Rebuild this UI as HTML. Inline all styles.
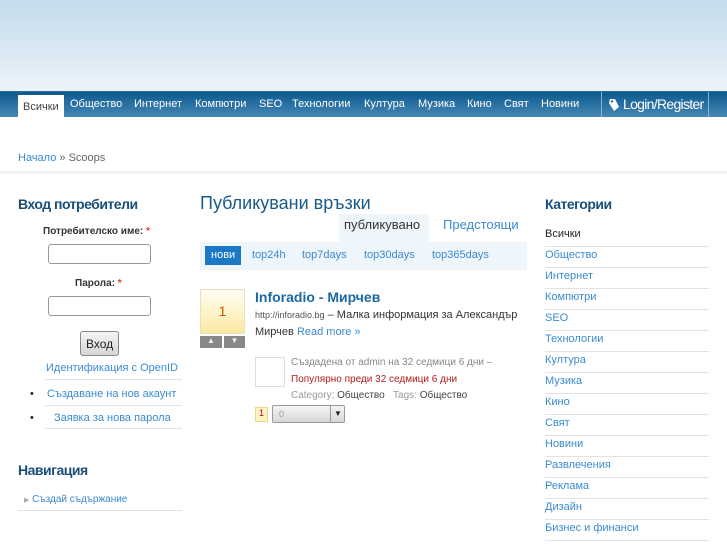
<!DOCTYPE html>
<html><head><meta charset="utf-8"><style>
*{margin:0;padding:0;box-sizing:border-box}
body{width:727px;height:545px;overflow:hidden;background:#fff;font-family:"Liberation Sans","DejaVu Sans",sans-serif;font-size:11px;color:#333;position:relative}
.top{position:absolute;left:0;top:0;width:727px;height:91px;background:linear-gradient(#c3dbec,#ecf3f9)}
.nav{position:absolute;left:0;top:91px;width:727px;height:26px;background:linear-gradient(#0c5a8e,#4787b5);border-top:1px solid #2c6f9f}
.nav span{position:absolute;top:6px;color:#fff;font-size:11px}
.nav .act{top:3px;left:18px;background:#fff;color:#444;height:23px;padding:6px 5px 0}
.lr{position:absolute;left:601px;top:0;width:108px;height:25px;border-left:1px solid #8fb3cf;border-right:1px solid #8fb3cf;color:#fff;font-size:14px;padding:4px 0 0 21px;letter-spacing:-0.7px}
a,.l{color:#3a8bd0}
.abs{position:absolute}
h2{position:absolute;font-size:14px;font-weight:bold;color:#1a4f7a;letter-spacing:-0.5px}
.inp{position:absolute;left:48px;width:103px;height:20px;border:1px solid #999;border-radius:3px;background:#fff}
.cat{position:absolute;left:545px;width:164px;height:21px;border-bottom:1px solid #e2e2e2;color:#3a8bd0;padding-top:2px;font-size:11px}
</style></head><body>
<div class="top"></div>
<div class="nav">
<span class="act">Всички</span>
<span style="left:70px">Общество</span>
<span style="left:134px">Интернет</span>
<span style="left:195px">Компютри</span>
<span style="left:259px">SEO</span>
<span style="left:292px">Технологии</span>
<span style="left:364px">Култура</span>
<span style="left:418px">Музика</span>
<span style="left:467px">Кино</span>
<span style="left:504px">Свят</span>
<span style="left:541px">Новини</span>
<div class="lr"><svg style="position:absolute;left:6px;top:6px" width="12" height="14" viewBox="0 0 12 14"><path d="M2 1 L7 1 L11 9 L6 13 L1 5Z" fill="#fff"/><circle cx="4" cy="3.5" r="1.2" fill="#2d6e9e"/></svg>Login/Register</div>
</div>
<div class="abs" style="left:18px;top:152px"><span class="l">Начало</span> <span style="color:#666">» Scoops</span></div>
<div class="abs" style="left:0;top:171px;width:727px;height:3px;background:#f2f2f2"></div>

<h2 style="left:18px;top:196px">Вход потребители</h2>
<div class="abs" style="left:43px;top:226px;font-weight:bold;font-size:10px">Потребителско име: <span style="color:#e33">*</span></div>
<div class="inp" style="top:244px"></div>
<div class="abs" style="left:75px;top:278px;font-weight:bold;font-size:10px">Парола: <span style="color:#e33">*</span></div>
<div class="inp" style="top:296px"></div>
<div class="abs" style="left:80px;top:331px;width:39px;height:25px;border:1px solid #888;border-radius:3px;background:linear-gradient(#f4f4f4,#d6d6d6);font-size:12px;padding:5px 0 0 5px;color:#222">Вход</div>
<div class="abs l" style="left:46px;top:362px">Идентификация с OpenID</div>
<div class="abs" style="left:45px;top:379px;width:137px;height:1px;background:#e4e4e4"></div>
<div class="abs" style="left:30px;top:388px;color:#222">•</div>
<div class="abs l" style="left:47px;top:388px">Създаване на нов акаунт</div>
<div class="abs" style="left:45px;top:405px;width:137px;height:1px;background:#e4e4e4"></div>
<div class="abs" style="left:30px;top:412px;color:#222">•</div>
<div class="abs l" style="left:54px;top:412px">Заявка за нова парола</div>
<div class="abs" style="left:45px;top:428px;width:137px;height:1px;background:#e4e4e4"></div>
<h2 style="left:18px;top:462px">Навигация</h2>
<div class="abs" style="left:24px;top:494px;font-size:10px"><span style="color:#aaa;font-size:7px">▶</span> <span class="l">Създай съдържание</span></div>
<div class="abs" style="left:18px;top:510px;width:164px;height:1px;background:#e4e4e4"></div>

<div class="abs" style="left:200px;top:193px;font-size:18px;color:#1a5a88">Публикувани връзки</div>
<div class="abs" style="left:339px;top:214px;width:90px;height:28px;background:#eef5fb;font-size:13px;padding:3px 0 0 5px;color:#333">публикувано</div>
<div class="abs l" style="left:443px;top:217px;font-size:13px">Предстоящи</div>
<div class="abs" style="left:200px;top:242px;width:327px;height:28px;background:#eef5fb"></div>
<div class="abs" style="left:205px;top:246px;width:36px;height:19px;background:#1b78c5;color:#fff;padding:3px 0 0 6px">нови</div>
<div class="abs l" style="left:252px;top:249px">top24h</div>
<div class="abs l" style="left:302px;top:249px">top7days</div>
<div class="abs l" style="left:364px;top:249px">top30days</div>
<div class="abs l" style="left:432px;top:249px">top365days</div>

<div class="abs" style="left:200px;top:289px;width:45px;height:45px;border:1px solid #e8e0c0;background:linear-gradient(#fffef4,#fbe9a0);color:#c85a00;font-size:14px;text-align:center;padding-top:13px">1</div>
<div class="abs" style="left:200px;top:336px;width:22px;height:12px;background:#888;color:#eee;font-size:8px;text-align:center">▲</div>
<div class="abs" style="left:224px;top:336px;width:21px;height:12px;background:#888;color:#eee;font-size:8px;text-align:center">▼</div>
<div class="abs" style="left:255px;top:289px;font-size:14px;font-weight:bold;color:#1a6aa5">Inforadio - Мирчев</div>
<div class="abs" style="left:255px;top:307px;width:280px;line-height:17px;font-size:11px"><span style="font-size:9px;color:#555">http://inforadio.bg</span> – Малка информация за Александър Мирчев <span class="l">Read more »</span></div>
<div class="abs" style="left:255px;top:357px;width:30px;height:30px;border:1px solid #ddd"></div>
<div class="abs" style="left:291px;top:357px;font-size:10px;color:#888">Създадена от admin на 32 седмици 6 дни –</div>
<div class="abs" style="left:291px;top:374px;font-size:10px;color:#b31b1b">Популярно преди 32 седмици 6 дни</div>
<div class="abs" style="left:291px;top:390px;font-size:10px;color:#999">Category: <span style="color:#444">Общество</span> &nbsp; Tags: <span style="color:#444">Общество</span></div>
<div class="abs" style="left:255px;top:407px;width:13px;height:15px;background:#fdf4c2;border:1px solid #e8d98a;font-size:9px;text-align:center;color:#a05">1</div>
<div class="abs" style="left:272px;top:405px;width:73px;height:18px;border:1px solid #999;border-radius:2px;background:linear-gradient(#f4f4f4,#d8d8d8);font-size:9px;color:#999;padding:3px 0 0 6px">0<span style="position:absolute;right:0;top:0;width:14px;height:16px;border-left:1px solid #999;color:#222;font-size:8px;padding:3px 0 0 3px">▼</span></div>

<h2 style="left:545px;top:196px">Категории</h2>
<div class="cat" style="top:226px;color:#222">Всички</div>
<div class="cat" style="top:247px">Общество</div>
<div class="cat" style="top:268px">Интернет</div>
<div class="cat" style="top:289px">Компютри</div>
<div class="cat" style="top:310px">SEO</div>
<div class="cat" style="top:331px">Технологии</div>
<div class="cat" style="top:352px">Култура</div>
<div class="cat" style="top:373px">Музика</div>
<div class="cat" style="top:394px">Кино</div>
<div class="cat" style="top:415px">Свят</div>
<div class="cat" style="top:436px">Новини</div>
<div class="cat" style="top:457px">Развлечения</div>
<div class="cat" style="top:478px">Реклама</div>
<div class="cat" style="top:499px">Дизайн</div>
<div class="cat" style="top:520px">Бизнес и финанси</div>
</body></html>
